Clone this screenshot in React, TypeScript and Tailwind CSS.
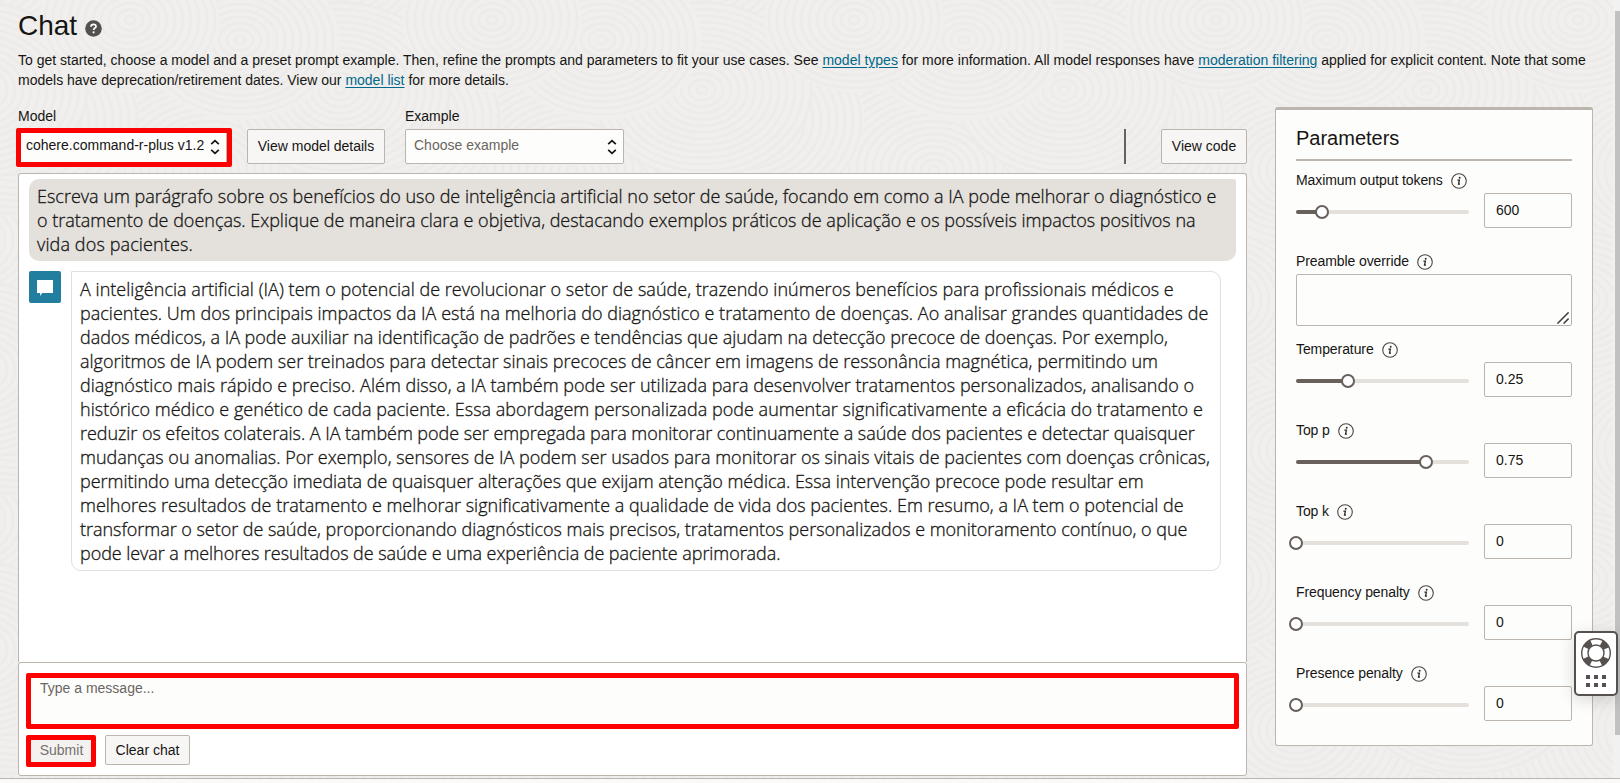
import React from "react";

type Line = { text: string; cls: string };

const userLines: Line[] = [
  { text: "Escreva um parágrafo sobre os benefícios do uso de inteligência artificial no setor de saúde, focando em como a IA pode melhorar o diagnóstico e", cls: "tracking-normal" },
  { text: "o tratamento de doenças. Explique de maneira clara e objetiva, destacando exemplos práticos de aplicação e os possíveis impactos positivos na", cls: "tracking-[-0.01px]" },
  { text: "vida dos pacientes.", cls: "tracking-[0.12px]" },
];

const replyLines: Line[] = [
  { text: "A inteligência artificial (IA) tem o potencial de revolucionar o setor de saúde, trazendo inúmeros benefícios para profissionais médicos e", cls: "tracking-[0.027px]" },
  { text: "pacientes. Um dos principais impactos da IA está na melhoria do diagnóstico e tratamento de doenças. Ao analisar grandes quantidades de", cls: "tracking-[0.02px]" },
  { text: "dados médicos, a IA pode auxiliar na identificação de padrões e tendências que ajudam na detecção precoce de doenças. Por exemplo,", cls: "tracking-[-0.04px]" },
  { text: "algoritmos de IA podem ser treinados para detectar sinais precoces de câncer em imagens de ressonância magnética, permitindo um", cls: "tracking-normal" },
  { text: "diagnóstico mais rápido e preciso. Além disso, a IA também pode ser utilizada para desenvolver tratamentos personalizados, analisando o", cls: "tracking-[0.013px]" },
  { text: "histórico médico e genético de cada paciente. Essa abordagem personalizada pode aumentar significativamente a eficácia do tratamento e", cls: "tracking-[0.025px]" },
  { text: "reduzir os efeitos colaterais. A IA também pode ser empregada para monitorar continuamente a saúde dos pacientes e detectar quaisquer", cls: "tracking-[-0.05px]" },
  { text: "mudanças ou anomalias. Por exemplo, sensores de IA podem ser usados para monitorar os sinais vitais de pacientes com doenças crônicas,", cls: "tracking-[-0.02px]" },
  { text: "permitindo uma detecção imediata de quaisquer alterações que exijam atenção médica. Essa intervenção precoce pode resultar em", cls: "tracking-[-0.03px]" },
  { text: "melhores resultados de tratamento e melhorar significativamente a qualidade de vida dos pacientes. Em resumo, a IA tem o potencial de", cls: "tracking-normal" },
  { text: "transformar o setor de saúde, proporcionando diagnósticos mais precisos, tratamentos personalizados e monitoramento contínuo, o que", cls: "tracking-[-0.03px]" },
  { text: "pode levar a melhores resultados de saúde e uma experiência de paciente aprimorada.", cls: "tracking-[-0.06px]" },
];

const MESSAGE_FONT = "font-['Open_Sans','Noto_Sans',sans-serif] text-[18px] leading-[24px] font-light [-webkit-text-stroke:0.3px_#161513]";

function MessageText({ lines }: { lines: Line[] }) {
  return (
    <p className={MESSAGE_FONT}>
      {lines.map((l) => (
        <span key={l.text} className={`block whitespace-nowrap ${l.cls}`}>
          {l.text}
        </span>
      ))}
    </p>
  );
}

const TILE_W = 362;
const TILE_H = 280;
const ripples = [
  { x: 60, y: 250, r: 150 },
  { x: 330, y: 240, r: 150 },
  { x: 210, y: 170, r: 130 },
  { x: 20, y: 120, r: 120 },
  { x: 340, y: 90, r: 110 },
  { x: 240, y: 40, r: 100 },
  { x: 130, y: 20, r: 90 },
];
const offsets = [-1, 0, 1];

function Ripple({ cx, cy, r }: { cx: number; cy: number; r: number }) {
  const rings: number[] = [];
  for (let k = 5; k < r; k += 8) rings.push(k);
  return (
    <g>
      <ellipse cx={cx} cy={cy} rx={r} ry={r * 0.8} fill="#f0efed" />
      {rings.map((k) => (
        <ellipse key={k} cx={cx} cy={cy} rx={k} ry={k * 0.8} fill="none" stroke="#ecebe9" strokeWidth="2.4" />
      ))}
    </g>
  );
}

function RippleBackground() {
  return (
    <svg className="absolute inset-0 h-full w-full" aria-hidden="true">
      <defs>
        <pattern id="ripples" width={TILE_W} height={TILE_H} patternUnits="userSpaceOnUse">
          {ripples.map((c) =>
            offsets.map((dx) =>
              offsets.map((dy) => <Ripple key={`${c.x}-${dx}-${dy}`} cx={c.x + dx * TILE_W} cy={c.y + dy * TILE_H} r={c.r} />),
            ),
          )}
        </pattern>
      </defs>
      <rect width="100%" height="100%" fill="url(#ripples)" />
    </svg>
  );
}

function InfoIcon() {
  return (
    <svg width="16" height="16" viewBox="0 0 16 16" className="mt-px block">
      <circle cx="8" cy="8" r="7.3" fill="none" stroke="#4a4643" strokeWidth="1.1" />
      <circle cx="8.7" cy="4.7" r="0.95" fill="#2b2826" />
      <path d="M6.4 7.2h2L7.5 11.2h1.5" fill="none" stroke="#2b2826" strokeWidth="1.3" />
    </svg>
  );
}

function Chevrons() {
  return (
    <svg width="10" height="16" viewBox="0 0 10 16" className="block">
      <path d="M1.2 5.2 5 1.6l3.8 3.6M1.2 10.8 5 14.4l3.8-3.6" fill="none" stroke="#161513" strokeWidth="1.7" />
    </svg>
  );
}

function ParamLabel({ children }: { children: React.ReactNode }) {
  return (
    <div className="flex h-5 items-center gap-2">
      <span className="tracking-[-0.09px]">{children}</span>
      <InfoIcon />
    </div>
  );
}

function SliderParam({ label, value, pct }: { label: string; value: string; pct: number }) {
  return (
    <div className="h-[81px]">
      <ParamLabel>{label}</ParamLabel>
      <div className="mt-[3px] flex items-center justify-between">
        <div className="relative mt-[3px] h-1 w-[173px] rounded-full bg-[#e4e1dd]">
          <div className="h-1 rounded-full bg-[#67605b]" style={{ width: `${pct}%` }} />
          <div
            className="absolute top-1/2 h-[14px] w-[14px] -translate-x-1/2 -translate-y-1/2 rounded-full border-2 border-[#67605b] bg-white"
            style={{ left: `${pct}%` }}
          />
        </div>
        <div className="h-[35px] w-[88px] rounded-[2px] border border-[#bbb5ae] pl-[11px] leading-[32px]">{value}</div>
      </div>
    </div>
  );
}

const link = "text-[#00688c] underline underline-offset-2";
const button = "flex items-center justify-center rounded-[2px] border border-[#bbb5ae] bg-[#f7f6f5] text-[#161513]";

export default function App() {
  return (
    <div className="relative flex h-[783px] w-[1620px] flex-col overflow-hidden bg-[#f0efed] font-['Liberation_Sans',Arial,sans-serif] text-[14px] text-[#161513]">
      <RippleBackground />

      <div className="relative flex h-[778px]">
        <main className="w-[1594px] shrink-0 pl-[18px]">
          <header className="pt-[10px]">
            <div className="flex h-[32px] items-center">
              <h1 className="text-[28px] leading-[32px]">Chat</h1>
              <svg width="17" height="17" viewBox="0 0 17 17" className="mt-[4px] ml-[8px] block">
                <circle cx="8.5" cy="8.5" r="8.3" fill="#54504d" />
                <path d="M6 6.7c0-1.6 1.1-2.4 2.5-2.4s2.5.8 2.5 2.1c0 1.6-2.4 1.7-2.4 3.5" fill="none" stroke="#fff" strokeWidth="1.7" />
                <circle cx="8.6" cy="12.3" r="1.1" fill="#fff" />
              </svg>
            </div>
            <p className="mt-[8px] leading-[20px] whitespace-nowrap">
              To get started, choose a model and a preset prompt example. Then, refine the prompts and parameters to fit your use cases. See{" "}
              <a className={link}>model types</a> for more information. All model responses have <a className={link}>moderation filtering</a> applied for explicit
              content. Note that some
              <br />
              models have deprecation/retirement dates. View our <a className={link}>model list</a> for more details.
            </p>
          </header>

          <div className="mt-[17px] flex gap-[28px]">
            <section className="w-[1229px]">
              <div className="flex h-[57px] items-end">
                <div className="w-[209px]">
                  <label className="block h-[21px] leading-[16px]">Model</label>
                  <div className="relative flex h-[35px] items-center justify-between rounded-[2px] border border-[#bbb5ae] bg-[#fdfdfc] pr-[6px] pl-[7px]">
                    <span className="mt-[-3px] whitespace-nowrap">cohere.command-r-plus v1.2</span>
                    <Chevrons />
                    <div className="absolute -top-[2px] -right-[6px] -bottom-[4px] -left-[3px] rounded-[2px] border-[5px] border-[#ff0000]" />
                  </div>
                </div>
                <button className={`${button} ml-[20px] h-[35px] w-[138px]`}>View model details</button>
                <div className="ml-[20px] w-[219px]">
                  <label className="block h-[21px] leading-[16px]">Example</label>
                  <div className="flex h-[35px] items-center justify-between rounded-[2px] border border-[#bbb5ae] bg-[#fdfdfc] pr-[6px] pl-[8px]">
                    <span className="mt-[-3px] text-[#6b6561]">Choose example</span>
                    <Chevrons />
                  </div>
                </div>
                <div className="ml-auto h-[35px] w-[2px] bg-[#67605b]" />
                <button className={`${button} ml-[35px] h-[35px] w-[86px]`}>View code</button>
              </div>

              <div className="mt-[9px] h-[489px] rounded-t-[3px] border border-b-0 border-[#bbb5ae] bg-white pt-[5px] pl-[10px]">
                <div className="h-[82px] w-[1207px] rounded-[10px] rounded-tr-[2px] bg-[#e4e1dd] pt-[5px] pl-[8px]">
                  <MessageText lines={userLines} />
                </div>
                <div className="mt-[10px] flex items-start gap-[10px]">
                  <div className="flex h-8 w-8 items-center justify-center rounded-[2px] bg-[#227e9e] pt-[2px]">
                    <svg width="16" height="16" viewBox="0 0 16 16" className="block">
                      <path d="M0 0h16v13H5.2L3.2 16V13H0z" fill="#fff" />
                    </svg>
                  </div>
                  <div className="h-[300px] w-[1150px] rounded-[10px] rounded-tl-none border border-[#e0e0e0] bg-white pt-[5px] pl-[8px]">
                    <MessageText lines={replyLines} />
                  </div>
                </div>
              </div>

              <div className="h-[114px] rounded-[3px] border border-[#bbb5ae] bg-white pt-[10px] pl-[7px]">
                <div className="h-[56px] w-[1213px] rounded-[2px] border-[5px] border-[#ff0000] bg-[#fdfdfc] pt-[2px] pl-[9px] leading-[16px] text-[#6b6561]">
                  Type a message...
                </div>
                <div className="mt-[6px] flex items-start gap-[9px]">
                  <button className="flex h-[32px] w-[70px] items-center justify-center rounded-[2px] border-[5px] border-[#ff0000] bg-[#f4f2f1] pb-[2px] pl-px text-[#75706c]">Submit</button>
                  <button className={`${button} h-[30px] w-[85px]`}>Clear chat</button>
                </div>
              </div>
            </section>

            <aside className="h-[639px] w-[318px] rounded-[3px] border border-t-[3px] border-[#bbb5ae] bg-[#fdfdfc] px-[20px]">
              <h2 className="h-[51px] border-b-2 border-[#bbb5ae] pt-[16px] text-[20px] leading-[24px]">Parameters</h2>
              <div className="pt-[9px]">
                <SliderParam label="Maximum output tokens" value="600" pct={15} />
                <div className="h-[88px]">
                  <ParamLabel>Preamble override</ParamLabel>
                  <div className="mt-[3px] flex h-[52px] items-end justify-end rounded-[2px] border border-[#bbb5ae] pr-[2px] pb-[1px]">
                    <svg width="12" height="12" viewBox="0 0 12 12" className="block">
                      <path d="M.4 11.6 11.6.4M6.6 11.6l5-5" stroke="#3f3b38" strokeWidth="1.5" />
                    </svg>
                  </div>
                </div>
                <SliderParam label="Temperature" value="0.25" pct={30} />
                <SliderParam label="Top p" value="0.75" pct={75} />
                <SliderParam label="Top k" value="0" pct={0} />
                <SliderParam label="Frequency penalty" value="0" pct={0} />
                <SliderParam label="Presence penalty" value="0" pct={0} />
              </div>
            </aside>
          </div>
        </main>

        <div className="ml-auto flex w-[7px] flex-col items-end bg-[#f1f1f1] pt-[11px]">
          <div className="h-[724px] w-[5px] bg-[#c1c1c1]" />
        </div>
      </div>

      <footer className="relative h-[5px] border-t border-[#bbb5ae] bg-[#fbf9f8]" />

      <div className="absolute top-[631px] left-[1574px] flex h-[65px] w-[44px] flex-col items-center rounded-[5px] border-2 border-[#56514e] bg-white pt-[5px] shadow-[0_4px_16px_rgba(0,0,0,0.15)]">
        <svg width="30" height="30" viewBox="0 0 30 30" className="block">
          <circle cx="15" cy="15" r="11.2" fill="none" stroke="#56514e" strokeWidth="6.5" strokeDasharray="7.4 10.19" strokeDashoffset="-5.1" />
          <circle cx="15" cy="15" r="14.3" fill="none" stroke="#56514e" strokeWidth="1.4" />
          <circle cx="15" cy="15" r="8" fill="#fff" stroke="#56514e" strokeWidth="1.4" />
        </svg>
        <div className="mt-[7px] grid grid-cols-3 gap-1">
          <i className="h-1 w-1 bg-[#56514e]" />
          <i className="h-1 w-1 bg-[#56514e]" />
          <i className="h-1 w-1 bg-[#56514e]" />
          <i className="h-1 w-1 bg-[#56514e]" />
          <i className="h-1 w-1 bg-[#56514e]" />
          <i className="h-1 w-1 bg-[#56514e]" />
        </div>
      </div>
    </div>
  );
}
